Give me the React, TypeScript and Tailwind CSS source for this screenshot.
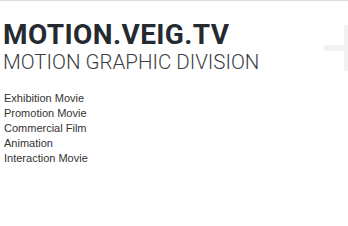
export default function App() {
  const items = [
    "Exhibition Movie",
    "Promotion Movie",
    "Commercial Film",
    "Animation",
    "Interaction Movie",
  ];

  return (
    <div className="relative w-[348px] h-[226px] overflow-hidden bg-white border-t border-[#dcdcdc] font-['Liberation_Sans',Arial,sans-serif]">
      {/* faint plus mark on the right edge */}
      <div className="absolute left-[324px] top-[44px] w-[20px] h-[6px] bg-[#f2f2f2]" />
      <div className="absolute left-[344px] top-[24px] w-[6px] h-[46px] bg-[#f2f2f2]" />

      <div className="relative pl-[3px] pt-[20px] font-['Roboto',sans-serif]">
        <h1 className="text-[28px] leading-[28px] font-bold text-[#252a31] tracking-[0.4px]">
          MOTION.VEIG.TV
        </h1>
        <p className="mt-[2px] text-[20.5px] leading-[22px] font-light text-[#3a3d42]">
          MOTION GRAPHIC DIVISION
        </p>
      </div>

      <ul className="mt-[18px] pl-[4px] text-[11px] leading-[15px] text-[#333]">
        {items.map((item) => (
          <li key={item}>{item}</li>
        ))}
      </ul>
    </div>
  );
}
